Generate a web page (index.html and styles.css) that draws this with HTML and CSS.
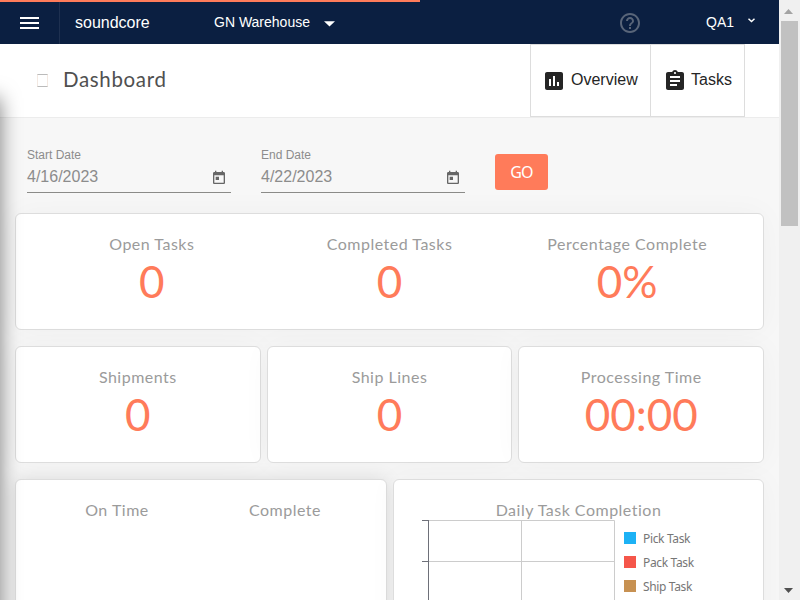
FILE: index.html
```html
<!DOCTYPE html>
<html lang="en">
<head>
<meta charset="utf-8">
<title>Dashboard</title>
<link rel="stylesheet" href="styles.css">
</head>
<body>
<div class="page">
  <div class="app">
    <header class="topbar">
      <div class="progress"></div>
      <div class="menu"><svg width="19" height="13" viewBox="0 0 19 13"><path d="M0 1h19M0 6h19M0 11h19" stroke="#fff" stroke-width="2"/></svg></div>
      <div class="brand"><span>soundcore</span></div>
      <div class="warehouse"><span>GN Warehouse</span><svg width="11" height="6" viewBox="0 0 11 6"><path d="M0 .3h11L5.500 5.500z" fill="#fff"/></svg></div>
      <svg class="help" width="24" height="24" viewBox="0 0 24 24"><path fill="#596579" d="M11 18h2v-2h-2v2zm1-16C6.480 2 2 6.480 2 12s4.480 10 10 10 10-4.480 10-10S17.520 2 12 2zm0 18c-4.410 0-8-3.590-8-8s3.590-8 8-8 8 3.590 8 8-3.590 8-8 8zm0-14c-2.210 0-4 1.790-4 4h2c0-1.100.9-2 2-2s2 .9 2 2c0 2-3 1.750-3 5h2c0-2.250 3-2.500 3-5 0-2.210-1.790-4-4-4z"/></svg>
      <div class="user"><span>QA1</span><svg width="7" height="5" viewBox="0 0 7 5"><path d="M.5.800l3 2.700 3-2.700" fill="none" stroke="#fff" stroke-width="1.500"/></svg></div>
    </header>
    <div class="titlebar">
      <span class="glyph"></span>
      <h1>Dashboard</h1>
      <nav class="tabs">
        <a class="tab overview"><svg width="24" height="24" viewBox="0 0 24 24"><path fill="#252525" d="M19 3H5c-1.100 0-2 .9-2 2v14c0 1.100.9 2 2 2h14c1.100 0 2-.9 2-2V5c0-1.100-.9-2-2-2zM9 17H7v-7h2v7zm4 0h-2V7h2v10zm4 0h-2v-4h2v4z"/></svg><span>Overview</span></a>
        <a class="tab tasks"><svg width="24" height="24" viewBox="0 0 24 24"><path fill="#252525" d="M19 3h-4.180C14.400 1.840 13.300 1 12 1s-2.400.84-2.820 2H5c-1.100 0-2 .9-2 2v14c0 1.100.9 2 2 2h14c1.100 0 2-.9 2-2V5c0-1.100-.9-2-2-2zm-7 0c.55 0 1 .45 1 1s-.45 1-1 1-1-.45-1-1 .45-1 1-1zm2 14H7v-2h7v2zm3-4H7v-2h10v2zm0-4H7V7h10v2z"/></svg><span>Tasks</span></a>
      </nav>
    </div>
    <main class="content">
      <form class="filters">
        <div class="field"><label>Start Date</label><div class="value"><span>4/16/2023</span><svg width="16" height="16" viewBox="0 0 24 24"><path fill="#666" d="M19 3h-1V1h-2v2H8V1H6v2H5c-1.110 0-1.990.9-1.990 2L3 19c0 1.100.89 2 2 2h14c1.100 0 2-.9 2-2V5c0-1.100-.9-2-2-2zm0 16H5V8h14v11zM7 10h5v5H7z"/></svg></div></div>
        <div class="field"><label>End Date</label><div class="value"><span>4/22/2023</span><svg width="16" height="16" viewBox="0 0 24 24"><path fill="#666" d="M19 3h-1V1h-2v2H8V1H6v2H5c-1.110 0-1.990.9-1.990 2L3 19c0 1.100.89 2 2 2h14c1.100 0 2-.9 2-2V5c0-1.100-.9-2-2-2zm0 16H5V8h14v11zM7 10h5v5H7z"/></svg></div></div>
        <button class="go" type="button">GO</button>
      </form>
      <section class="row">
        <div class="card summary">
          <div class="stat"><p class="label">Open Tasks</p><p class="num">0</p></div>
          <div class="stat"><p class="label">Completed Tasks</p><p class="num">0</p></div>
          <div class="stat"><p class="label">Percentage Complete</p><p class="num">0%</p></div>
        </div>
      </section>
      <section class="row">
        <div class="card stat"><p class="label">Shipments</p><p class="num">0</p></div>
        <div class="card stat"><p class="label">Ship Lines</p><p class="num">0</p></div>
        <div class="card stat"><p class="label">Processing Time</p><p class="num">00:00</p></div>
      </section>
      <section class="row halves">
        <div class="card gauges"><p class="label">On Time</p><p class="label">Complete</p></div>
        <div class="card chart">
          <p class="label">Daily Task Completion</p>
          <div class="plot">
            <svg width="193" height="180" viewBox="0 0 193 180"><path d="M7 .5h185.500V180M7 41.500h186M99.500 0v180" fill="none" stroke="#ccc"/><path d="M6.500 0v180M0 .5h7M0 41.500h7" fill="none" stroke="#6e7079"/></svg>
            <ul class="legend">
              <li><i class="swatch pick"></i>Pick Task</li>
              <li><i class="swatch pack"></i>Pack Task</li>
              <li><i class="swatch ship"></i>Ship Task</li>
            </ul>
          </div>
        </div>
      </section>
    </main>
    <div class="drawer"></div>
  </div>
  <div class="scrollbar">
    <svg width="9" height="5" viewBox="0 0 9 5"><path d="M0 5L4.500 0 9 5z" fill="#a3a3a3"/></svg>
    <div class="thumb"></div>
    <svg class="down" width="9" height="5" viewBox="0 0 9 5"><path d="M0 0h9L4.500 5z" fill="#505050"/></svg>
  </div>
</div>
</body>
</html>
```
FILE: styles.css
```css
* { box-sizing: border-box; }
body { margin: 0; overflow: hidden; font-family: "Liberation Sans", Arial, sans-serif; }
p, h1, ul { margin: 0; padding: 0; font-weight: 400; }
svg { display: block; flex: none; }
.page { display: flex; width: 800px; height: 600px; overflow: hidden; }
.app { position: relative; width: 779px; height: 600px; overflow: hidden; background: #f7f7f7; }

.topbar { position: relative; display: flex; align-items: center; height: 44px; background: #0b1f41; color: #fff; }
.progress { position: absolute; left: 0; top: 0; width: 420px; height: 2px; background: #ff7b5a; }
.menu { display: flex; align-items: center; width: 60px; height: 44px; padding: 2px 0 0 20px; border-right: 1px solid #1e3050; }
.brand { width: 154px; padding: 2px 0 0 15px; font-size: 16px; }
.warehouse { display: flex; align-items: center; gap: 14px; width: 404px; font-size: 14px; }
.warehouse svg { margin-top: 3px; }
.help { margin-top: 2px; }
.user { display: flex; align-items: center; gap: 14px; margin-left: 64px; font-size: 14px; }
.user svg { margin-top: -4px; }

.titlebar { display: flex; align-items: center; height: 74px; padding: 0 34px 0 37px; background: #fff; border-bottom: 1px solid #ececec; }
.glyph { width: 11px; height: 13px; border: 1px solid #f3e9e2; border-top-color: #bbb; border-bottom-color: #bbb; }
.titlebar h1 { margin: -3px 0 0 15px; font: 400 20.500px/24px Lato, sans-serif; letter-spacing: .65px; color: #505050; }
.tabs { display: flex; height: 73px; margin-left: auto; border: 1px solid #ddd; }
.tab { display: flex; align-items: center; gap: 4px; padding-left: 12px; font-size: 16px; color: #252525; }
.tab span { margin-top: -2px; }
.overview { width: 120px; border-right: 1px solid #ddd; }
.overview svg { margin-left: -1px; }
.overview span { margin-left: 1px; }
.tasks { width: 93px; }

.content { padding: 29px 15px 0; }
.filters { display: flex; height: 66px; padding-left: 12px; }
.field { width: 204px; height: 46px; margin-right: 30px; border-bottom: 1px solid #8b8b88; color: #8c8c8c; }
.field label { display: block; padding-top: 1px; font-size: 12px; line-height: 14px; }
.value { display: flex; align-items: center; justify-content: space-between; height: 30px; padding-right: 4px; font-size: 16px; }
.value svg { margin-top: 1px; }
.go { width: 53px; height: 36px; margin-top: 7px; padding: 0; border: 0; border-radius: 3px; background: #ff7b5a; color: #fff; font: 400 16px "Noto Sans", sans-serif; letter-spacing: -.8px; }

.row { display: flex; gap: 6px; margin-bottom: 16px; }
.card { flex: 1 1 0; height: 117px; background: #fff; border: 1px solid #ddd; border-radius: 6px; box-shadow: 0 0 30px rgba(0, 0, 0, .035); }
.summary { display: flex; padding: 0 17px; }
.stat { flex: 1 1 0; text-align: center; }
.label { padding-top: 19px; font: 400 16px/22px Lato, sans-serif; letter-spacing: .5px; color: #9b9b9b; text-align: center; }
.num { font: 400 44px/52px Lato, sans-serif; color: #ff7b5a; }
.halves { display: grid; grid-template-columns: 372px 371px; }
.gauges, .chart { height: 240px; }
.gauges { display: flex; padding: 0 17px; box-shadow: 0 0 18px rgba(0, 0, 0, .12); }
.gauges .label { flex: 1 1 0; }
.plot { display: flex; padding-left: 28px; margin-top: -1px; }
.legend { padding: 6px 0 0 9px; list-style: none; }
.legend li { display: flex; align-items: center; gap: 7px; height: 24px; font: 12px "Noto Sans", sans-serif; letter-spacing: -.35px; color: #767676; }
.swatch { width: 12px; height: 12px; }
.pick { background: #1db2f5; }
.pack { background: #f5564a; }
.ship { background: #c79152; }

.drawer { position: absolute; left: -40px; top: 100px; width: 38px; height: 560px; box-shadow: 0 0 20px 2px rgba(0, 0, 0, .5); }

.scrollbar { display: flex; flex-direction: column; align-items: center; width: 21px; padding: 9px 2px 7px 0; background: #f0f0f0; }
.thumb { width: 17px; height: 205px; margin: 7px 0 auto 2px; background: #c1c1c1; }
```
